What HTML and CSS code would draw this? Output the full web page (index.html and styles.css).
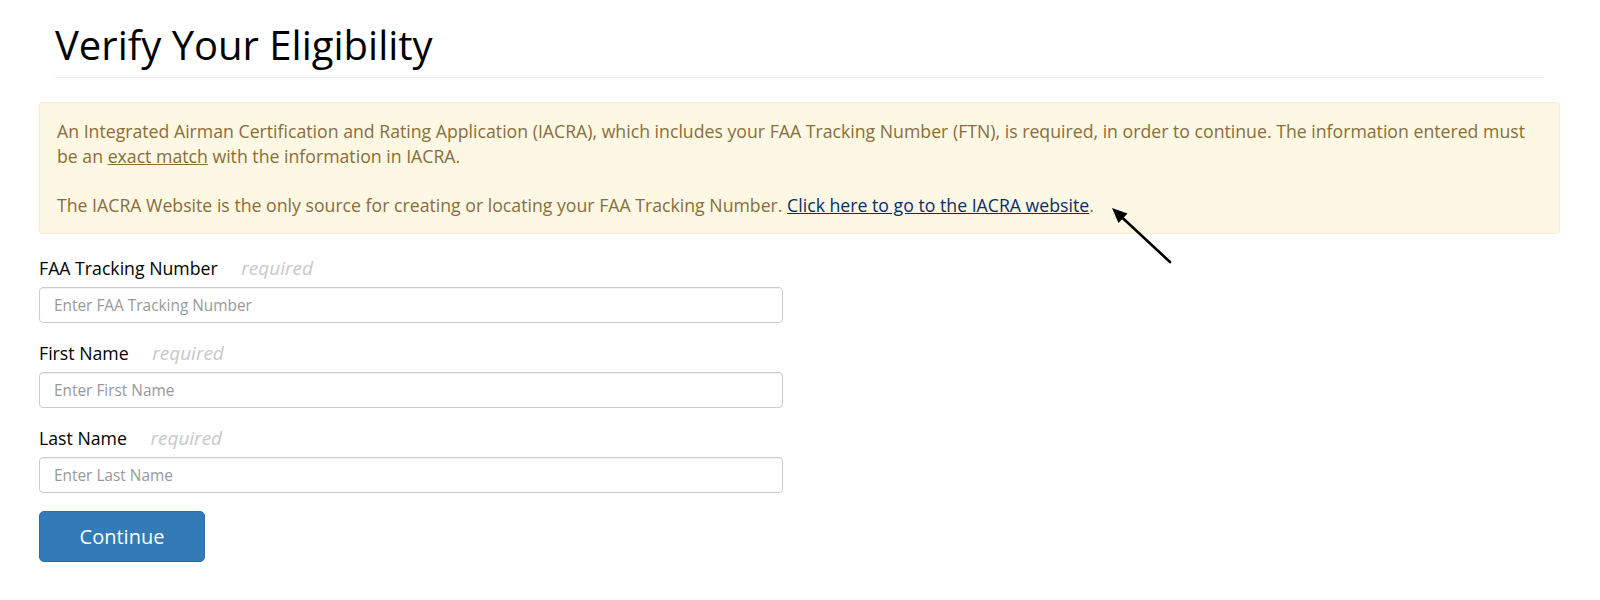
FILE: index.html
```html
<!DOCTYPE html>
<html lang="en">
<head>
<meta charset="utf-8">
<title>Verify Your Eligibility</title>
<link rel="stylesheet" href="styles.css">
</head>
<body>
<div class="page">
  <div class="page-header">
    <h1 class="title">Verify Your Eligibility</h1>
  </div>
  <div class="alert">
    An Integrated Airman Certification and Rating Application (IACRA), which includes your FAA Tracking Number (FTN), is required, in order to continue. The information entered must be an <u>exact match</u> with the information in IACRA.<br><br>The IACRA Website is the only source for creating or locating your FAA Tracking Number. <a class="alert-link" href="#">Click here to go to the IACRA website</a>.
  </div>
  <form class="form">
    <div class="group">
      <label class="label">FAA Tracking Number <span class="req">required</span></label>
      <input class="input" type="text" placeholder="Enter FAA Tracking Number">
    </div>
    <div class="group">
      <label class="label">First Name <span class="req">required</span></label>
      <input class="input" type="text" placeholder="Enter First Name">
    </div>
    <div class="group">
      <label class="label">Last Name <span class="req">required</span></label>
      <input class="input" type="text" placeholder="Enter Last Name">
    </div>
    <button class="btn" type="button">Continue</button>
  </form>
</div>
<svg class="annotation" width="1600" height="600" viewBox="0 0 1600 600" aria-hidden="true">
  <line x1="1170" y1="262" x2="1120" y2="215.5" stroke="#000" stroke-width="2.6" stroke-linecap="round"/>
  <polygon points="1112,208 1127.5,213.5 1118.5,223" fill="#000"/>
</svg>
</body>
</html>
```

FILE: styles.css
```css
html, body {
  margin: 0;
  padding: 0;
  background: #fff;
}
body {
  position: relative;
  font-family: "Open Sans", "Liberation Sans", sans-serif;
  font-size: 17.7px;
  line-height: 24.5px;
  color: #333;
}
.page {
  padding: 0 40px 0 39px;
}
.page-header {
  margin: 0 16px;
  border-bottom: 1px solid #eee;
}
.title {
  margin: 0;
  padding: 23px 0 10px;
  font-size: 40px;
  line-height: 44px;
  font-weight: 400;
  color: #000;
}
.alert {
  margin-top: 24px;
  padding: 16px 17px;
  background: #fcf8e3;
  border: 1px solid #faebcc;
  border-radius: 4px;
  color: #8a6d3b;
}
.alert u {
  text-decoration: underline;
}
.alert-link {
  color: #0b2c6a;
  text-decoration: underline;
}
.form {
  margin-top: 22px;
  display: flex;
  flex-direction: column;
  align-items: flex-start;
}
.group {
  display: flex;
  flex-direction: column;
  margin-bottom: 18px;
}
.label {
  color: #000;
  font-weight: 400;
  margin-bottom: 6.5px;
}
.req {
  margin-left: 19px;
  font-size: 19px;
  font-style: italic;
  color: #c8c8c8;
}
.input {
  box-sizing: border-box;
  width: 744px;
  height: 36px;
  padding: 0 14px;
  border: 1px solid #ccc;
  border-radius: 4px;
  font-family: "Open Sans", "Liberation Sans", sans-serif;
  font-size: 15.4px;
  color: #555;
  box-shadow: inset 0 1px 1px rgba(0,0,0,0.06);
}
.input::placeholder {
  color: #999;
}
.btn {
  box-sizing: border-box;
  width: 166px;
  height: 51px;
  background: #337ab7;
  border: 1px solid #2e6da4;
  border-radius: 5px;
  color: #fff;
  font-family: "Open Sans", "Liberation Sans", sans-serif;
  font-size: 20px;
  padding: 0;
}
.annotation {
  position: absolute;
  left: 0;
  top: 0;
  pointer-events: none;
}
```
